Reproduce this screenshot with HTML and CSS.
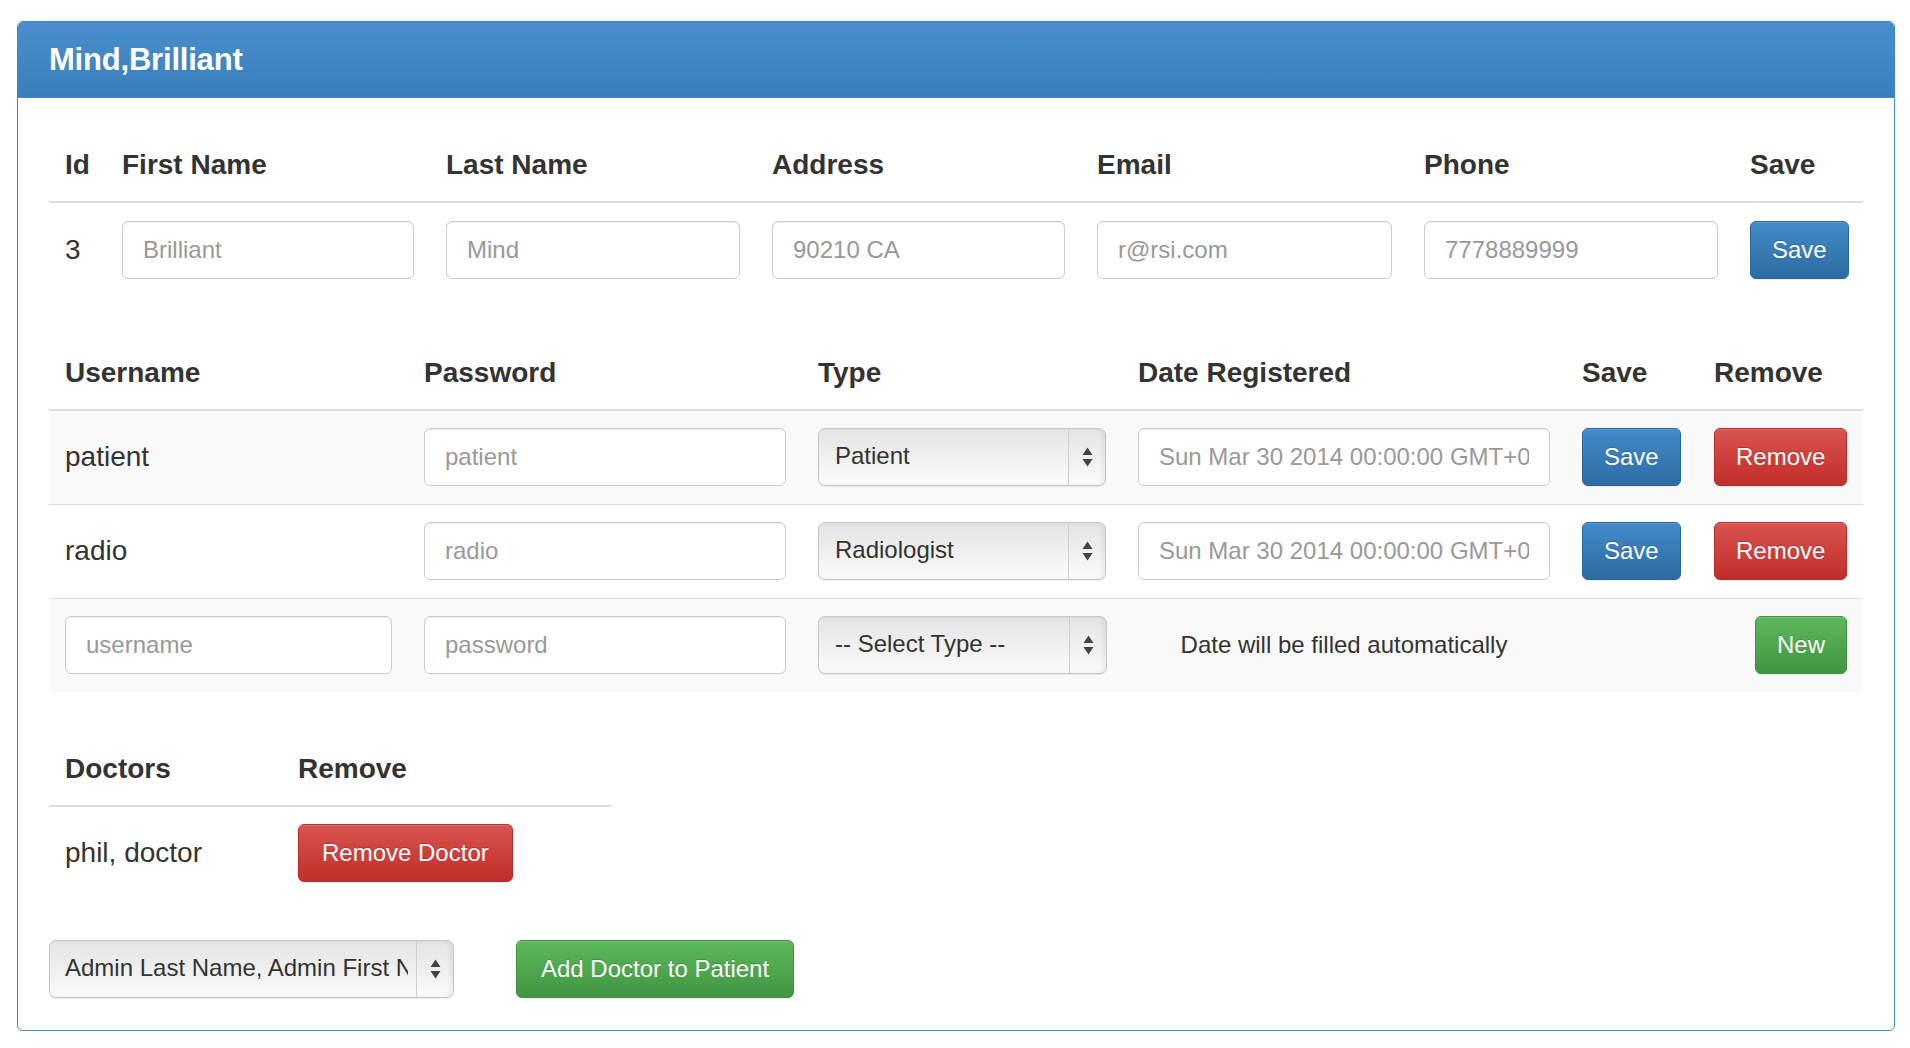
FILE: index.html
```html
<!DOCTYPE html>
<html>
<head>
<meta charset="utf-8">
<title>Mind,Brilliant</title>
<link rel="stylesheet" href="styles.css">
</head>
<body>
<div class="panel">
  <div class="panel-heading"><h3 class="panel-title">Mind,Brilliant</h3></div>
  <div class="panel-body">
    <table class="table t-person">
      <colgroup>
        <col class="c-id"><col class="c-fn"><col class="c-ln"><col class="c-addr"><col class="c-email"><col class="c-phone"><col class="c-save">
      </colgroup>
      <thead>
        <tr><th>Id</th><th>First Name</th><th>Last Name</th><th>Address</th><th>Email</th><th>Phone</th><th>Save</th></tr>
      </thead>
      <tbody>
        <tr>
          <td>3</td>
          <td><input class="form-control" type="text" placeholder="Brilliant"></td>
          <td><input class="form-control" type="text" placeholder="Mind"></td>
          <td><input class="form-control" type="text" placeholder="90210 CA"></td>
          <td><input class="form-control" type="text" placeholder="r@rsi.com"></td>
          <td><input class="form-control" type="text" placeholder="7778889999"></td>
          <td><button class="btn btn-primary">Save</button></td>
        </tr>
      </tbody>
    </table>

    <table class="table table-striped t-users">
      <colgroup>
        <col class="c-user"><col class="c-pass"><col class="c-type"><col class="c-date"><col class="c-usave"><col class="c-remove">
      </colgroup>
      <thead>
        <tr><th>Username</th><th>Password</th><th>Type</th><th>Date Registered</th><th>Save</th><th>Remove</th></tr>
      </thead>
      <tbody>
        <tr>
          <td>patient</td>
          <td><input class="form-control" type="text" placeholder="patient"></td>
          <td>
            <div class="select">
              <select><option>Patient</option><option>Radiologist</option></select>
              <span class="arrows"><svg width="11" height="20" viewBox="0 0 11 20"><path d="M0.5 8 L5.5 0.5 L10.5 8 Z M0.5 12 L10.5 12 L5.5 19.5 Z" fill="#444"/></svg></span>
            </div>
          </td>
          <td><input class="form-control" type="text" placeholder="Sun Mar 30 2014 00:00:00 GMT+0200 (CEST)"></td>
          <td><button class="btn btn-primary">Save</button></td>
          <td><button class="btn btn-danger">Remove</button></td>
        </tr>
        <tr>
          <td>radio</td>
          <td><input class="form-control" type="text" placeholder="radio"></td>
          <td>
            <div class="select">
              <select><option>Radiologist</option><option>Patient</option></select>
              <span class="arrows"><svg width="11" height="20" viewBox="0 0 11 20"><path d="M0.5 8 L5.5 0.5 L10.5 8 Z M0.5 12 L10.5 12 L5.5 19.5 Z" fill="#444"/></svg></span>
            </div>
          </td>
          <td><input class="form-control" type="text" placeholder="Sun Mar 30 2014 00:00:00 GMT+0200 (CEST)"></td>
          <td><button class="btn btn-primary">Save</button></td>
          <td><button class="btn btn-danger">Remove</button></td>
        </tr>
        <tr>
          <td><input class="form-control" type="text" placeholder="username"></td>
          <td><input class="form-control" type="password" placeholder="password"></td>
          <td>
            <div class="select select-wide">
              <select><option>-- Select Type --</option><option>Patient</option><option>Radiologist</option></select>
              <span class="arrows"><svg width="11" height="20" viewBox="0 0 11 20"><path d="M0.5 8 L5.5 0.5 L10.5 8 Z M0.5 12 L10.5 12 L5.5 19.5 Z" fill="#444"/></svg></span>
            </div>
          </td>
          <td class="note">Date will be filled automatically</td>
          <td></td>
          <td class="right"><button class="btn btn-success">New</button></td>
        </tr>
      </tbody>
    </table>

    <table class="table t-doctors">
      <colgroup><col class="c-doc"><col class="c-docrm"></colgroup>
      <thead>
        <tr><th>Doctors</th><th>Remove</th></tr>
      </thead>
      <tbody>
        <tr>
          <td>phil, doctor</td>
          <td><button class="btn btn-danger btn-wide">Remove Doctor</button></td>
        </tr>
      </tbody>
    </table>

    <div class="add-row">
      <div class="select select-doctor">
        <select><option>Admin Last Name, Admin First Name</option><option>phil, doctor</option></select>
        <span class="arrows"><svg width="11" height="20" viewBox="0 0 11 20"><path d="M0.5 8 L5.5 0.5 L10.5 8 Z M0.5 12 L10.5 12 L5.5 19.5 Z" fill="#444"/></svg></span>
      </div>
      <button class="btn btn-success btn-add">Add Doctor to Patient</button>
    </div>
  </div>
</div>
</body>
</html>
```
FILE: styles.css
```css
* { box-sizing: border-box; }

body {
  margin: 0;
  background: #fff;
  font-family: "Liberation Sans", Arial, Helvetica, sans-serif;
  color: #333;
}

.panel {
  margin: 21px 15px 0 17px;
  border: 1px solid #428bca;
  border-radius: 6px;
  background: #fff;
  box-shadow: 0 1px 2px rgba(0, 0, 0, 0.05);
}

.panel-heading {
  height: 76px;
  padding: 0 31px;
  display: flex;
  align-items: center;
  background: linear-gradient(to bottom, #4a8fcc 0%, #3a7fbd 100%);
  border-bottom: 1px solid #428bca;
  border-radius: 5px 5px 0 0;
}

.panel-title {
  margin: 0;
  font-size: 31px;
  font-weight: bold;
  color: #fff;
  letter-spacing: -0.2px;
}

.panel-body {
  padding: 20px 31px 32px;
}

.table {
  width: 100%;
  border-collapse: collapse;
  table-layout: fixed;
}

.table th {
  text-align: left;
  font-size: 28px;
  font-weight: bold;
  line-height: 40px;
  padding: 27px 16px 16px;
  border-bottom: 2px solid #ddd;
  vertical-align: bottom;
  color: #333;
  white-space: nowrap;
}

.table td {
  font-size: 28px;
  line-height: 40px;
  padding: 17px 16px;
  border-top: 1px solid #ddd;
  vertical-align: middle;
  color: #333;
}

.t-person td { padding-top: 18px; }

.table-striped tbody tr:nth-child(odd) td { background: #f9f9f9; }

.t-users { margin-top: 30px; }
.t-users td { padding-top: 17px; padding-bottom: 18px; }

.t-doctors {
  margin-top: 30px;
  width: 562px;
}

/* column widths */
.c-id { width: 57px; }
.c-fn { width: 324px; }
.c-ln { width: 326px; }
.c-addr { width: 325px; }
.c-email { width: 327px; }
.c-phone { width: 326px; }
.c-save { width: 129px; }

.c-user { width: 359px; }
.c-pass { width: 394px; }
.c-type { width: 320px; }
.c-date { width: 444px; }
.c-usave { width: 132px; }
.c-remove { width: 165px; }

.c-doc { width: 233px; }
.c-docrm { width: 329px; }

.form-control {
  display: block;
  width: 100%;
  height: 58px;
  padding: 0 20px;
  font-family: "Liberation Sans", Arial, Helvetica, sans-serif;
  font-size: 24px;
  color: #555;
  background: #fff;
  border: 1px solid #ccc;
  border-radius: 6px;
  box-shadow: inset 0 1px 1px rgba(0, 0, 0, 0.075);
  outline: none;
}

.form-control::placeholder { color: #999; opacity: 1; }

.note {
  text-align: center;
  font-size: 24px !important;
}

.right { text-align: right; }

.btn {
  display: inline-block;
  height: 58px;
  padding: 0 21px;
  font-family: "Liberation Sans", Arial, Helvetica, sans-serif;
  font-size: 24px;
  line-height: 56px;
  color: #fff;
  border: 1px solid transparent;
  border-radius: 6px;
  text-shadow: 0 -1px 0 rgba(0, 0, 0, 0.2);
  box-shadow: inset 0 1px 0 rgba(255, 255, 255, 0.15), 0 1px 1px rgba(0, 0, 0, 0.075);
  cursor: pointer;
  white-space: nowrap;
  vertical-align: middle;
}

.btn-primary {
  background: linear-gradient(to bottom, #428bca 0%, #2d6ca2 100%);
  border-color: #2b669a;
}

.btn-danger {
  background: linear-gradient(to bottom, #d9534f 0%, #c12e2a 100%);
  border-color: #b92c28;
}

.btn-success {
  background: linear-gradient(to bottom, #5cb85c 0%, #419641 100%);
  border-color: #3e8f3e;
}

.btn-wide { padding: 0 23px; }
.btn-add { padding: 0 24px; }

.select {
  display: flex;
  width: 100%;
  height: 58px;
  border: 1px solid #c6c6c6;
  border-radius: 7px;
  background: linear-gradient(to bottom, #e4e4e4 0%, #f0f0f0 55%, #fbfbfb 100%);
  box-shadow: inset -3px 0 4px rgba(0, 0, 0, 0.06), 0 1px 1px rgba(0, 0, 0, 0.08);
  overflow: hidden;
}

.select select {
  flex: 1;
  min-width: 0;
  appearance: none;
  -webkit-appearance: none;
  border: 0;
  background: transparent;
  padding: 0 8px 4px 16px;
  font-family: "Liberation Sans", Arial, Helvetica, sans-serif;
  font-size: 24px;
  color: #333;
  outline: none;
}

.select .arrows {
  flex: none;
  width: 37px;
  display: flex;
  align-items: center;
  justify-content: center;
  border-left: 1px solid #cfcfcf;
}

.select-wide { width: 289px; }

.select-doctor { width: 405px; }
.select-doctor select { padding-left: 15px; }

.add-row {
  display: flex;
  align-items: center;
  gap: 62px;
  margin-top: 41px;
}
```
